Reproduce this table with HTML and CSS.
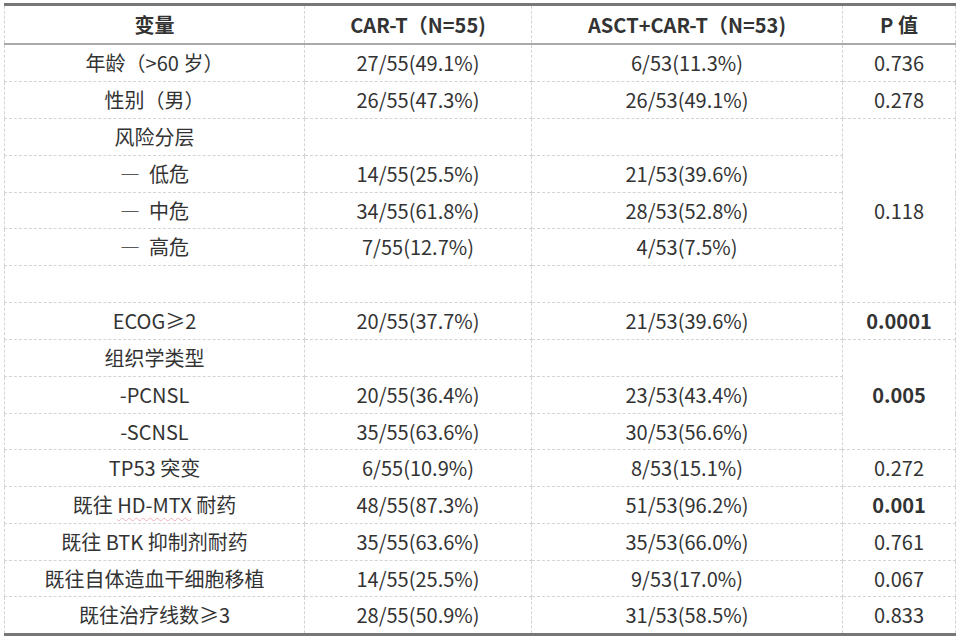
FILE: index.html
```html
<!DOCTYPE html>
<html lang="zh">
<head>
<meta charset="utf-8">
<link rel="stylesheet" href="styles.css">
</head>
<body>
<table class="tbl">
  <colgroup>
    <col class="c1"><col class="c2"><col class="c3"><col class="c4">
  </colgroup>
  <thead>
    <tr><th>变量</th><th>CAR-T（N=55)</th><th>ASCT+CAR-T（N=53)</th><th>P 值</th></tr>
  </thead>
  <tbody>
    <tr><td>年龄（&gt;60 岁）</td><td>27/55(49.1%)</td><td>6/53(11.3%)</td><td>0.736</td></tr>
    <tr><td>性别（男）</td><td>26/55(47.3%)</td><td>26/53(49.1%)</td><td>0.278</td></tr>
    <tr><td>风险分层</td><td></td><td></td><td rowspan="5">0.118</td></tr>
    <tr><td>—&nbsp; 低危</td><td>14/55(25.5%)</td><td>21/53(39.6%)</td></tr>
    <tr class="short"><td>—&nbsp; 中危</td><td>34/55(61.8%)</td><td>28/53(52.8%)</td></tr>
    <tr><td>—&nbsp; 高危</td><td>7/55(12.7%)</td><td>4/53(7.5%)</td></tr>
    <tr><td></td><td></td><td></td></tr>
    <tr><td>ECOG≥2</td><td>20/55(37.7%)</td><td>21/53(39.6%)</td><td class="b">0.0001</td></tr>
    <tr><td>组织学类型</td><td></td><td></td><td rowspan="3" class="b">0.005</td></tr>
    <tr><td>-PCNSL</td><td>20/55(36.4%)</td><td>23/53(43.4%)</td></tr>
    <tr class="short"><td>-SCNSL</td><td>35/55(63.6%)</td><td>30/53(56.6%)</td></tr>
    <tr><td>TP53 突变</td><td>6/55(10.9%)</td><td>8/53(15.1%)</td><td>0.272</td></tr>
    <tr><td>既往 <span class="spell">HD-MTX</span> 耐药</td><td>48/55(87.3%)</td><td>51/53(96.2%)</td><td class="b">0.001</td></tr>
    <tr><td>既往 BTK 抑制剂耐药</td><td>35/55(63.6%)</td><td>35/53(66.0%)</td><td>0.761</td></tr>
    <tr class="short"><td>既往自体造血干细胞移植</td><td>14/55(25.5%)</td><td>9/53(17.0%)</td><td>0.067</td></tr>
    <tr><td>既往治疗线数≥3</td><td>28/55(50.9%)</td><td>31/53(58.5%)</td><td>0.833</td></tr>
  </tbody>
</table>
</body>
</html>
```
FILE: styles.css
```css
html, body {
  margin: 0;
  padding: 0;
  background: #fff;
}
body {
  padding: 3px 0 0 4px;
  font-family: "Noto Sans CJK SC", "Noto Sans", sans-serif;
  color: #333;
  font-size: 20px;
}
.tbl {
  border-collapse: collapse;
  table-layout: fixed;
  width: 951px;
  border-top: 3px solid #777;
  border-bottom: 3px solid #777;
}
.c1 { width: 300px; }
.c2 { width: 227px; }
.c3 { width: 311px; }
.c4 { width: 113px; }
th, td {
  border-left: 1px dashed #d4d4d4;
  border-right: 1px dashed #d4d4d4;
  text-align: center;
  vertical-align: middle;
  padding: 0;
  line-height: 26px;
}
th {
  height: 37px;
  font-weight: bold;
  border-bottom: 2px solid #aaa;
}
td {
  height: 36px;
  border-top: 1px dashed #d4d4d4;
  border-bottom: 1px dashed #d4d4d4;
}
.short td {
  height: 35px;
}
thead + tbody tr:first-child td {
  border-top: 2px solid #aaa;
}
tbody tr:last-child td {
  border-bottom: 3px solid #777;
}
.b {
  font-weight: bold;
}
.spell {
  text-decoration: underline wavy #f4b0b8;
  text-decoration-thickness: 1px;
  text-underline-offset: 4px;
}
```
